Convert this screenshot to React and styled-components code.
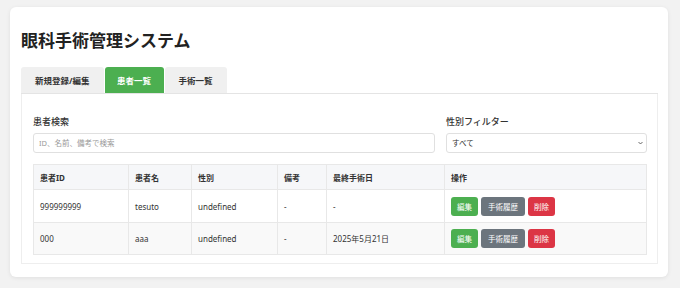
import React from "react";
import styled, { createGlobalStyle } from "styled-components";

const GlobalStyle = createGlobalStyle`
  body {
    margin: 0;
    background: #f2f2f2;
    font-family: "Noto Sans", "Noto Sans CJK JP", sans-serif;
    color: #333;
  }
`;

const Page = styled.div`
  padding: 7px 12px 12px 10px;
`;

const Card = styled.div`
  background: #fff;
  border-radius: 6px;
  box-shadow: 0 1px 4px rgba(0, 0, 0, 0.08);
  padding: 22px 10px 13px 11px;
`;

const Title = styled.h1`
  margin: 0 0 14px;
  font-size: 17px;
  line-height: 24px;
  font-weight: 700;
  color: #222;
`;

const TabBar = styled.div`
  display: flex;
  gap: 1px;
  border-bottom: 1px solid #e4e4e4;
`;

const Tab = styled.button`
  height: 26px;
  padding: 0 ${(p) => p.$pad}px;
  border: none;
  border-radius: 3px 3px 0 0;
  font-family: inherit;
  font-size: 8.5px;
  font-weight: 700;
  background: ${(p) => (p.$active ? "#4caf50" : "#f0f0f0")};
  color: ${(p) => (p.$active ? "#fff" : "#333")};
`;

const Panel = styled.div`
  border: 1px solid #eeeeee;
  border-top: none;
  padding: 21px 10px 8px 11px;
`;

const Filters = styled.div`
  display: flex;
  gap: 11px;
  margin-bottom: 11px;
`;

const Field = styled.div`
  flex: ${(p) => p.$grow};
  display: flex;
  flex-direction: column;
`;

const Label = styled.label`
  font-size: 9px;
  line-height: 13px;
  font-weight: 500;
  color: #333;
  margin-bottom: 5px;
`;

const Input = styled.input`
  display: block;
  box-sizing: border-box;
  height: 20px;
  border: 1px solid #e0e0e0;
  border-radius: 3px;
  padding: 0 5px;
  font-family: inherit;
  font-size: 7.5px;
  outline: none;
  &::placeholder {
    color: #999;
  }
`;

const SelectWrap = styled.div`
  position: relative;
  height: 20px;
`;

const Select = styled.select`
  display: block;
  box-sizing: border-box;
  width: 100%;
  height: 20px;
  border: 1px solid #e0e0e0;
  border-radius: 3px;
  padding: 0 5px;
  font-family: inherit;
  font-size: 7.5px;
  color: #333;
  background: #fff;
  appearance: none;
  outline: none;
`;

const Chevron = styled.svg`
  position: absolute;
  right: 4px;
  top: 50%;
  transform: translateY(-50%);
  pointer-events: none;
`;

const Table = styled.table`
  width: 100%;
  table-layout: fixed;
  border-collapse: collapse;
  font-size: 8px;
`;

const Th = styled.th`
  box-sizing: border-box;
  text-align: left;
  font-weight: 700;
  background: #f6f7f9;
  height: 25px;
  padding: 0 6px;
  border: 1px solid #e8e8e8;
  ${(p) => p.$w && `width: ${p.$w}px;`}
`;

const Row = styled.tr`
  background: ${(p) => (p.$striped ? "#f9f9f9" : "#fff")};
`;

const Td = styled.td`
  box-sizing: border-box;
  height: ${(p) => p.$h}px;
  padding: 0 6px;
  border: 1px solid #e8e8e8;
  color: #333;
`;

const Actions = styled.div`
  display: flex;
  gap: 3px;
`;

const ActionButton = styled.button`
  height: 19px;
  padding: 0 ${(p) => (p.$wide ? 7 : 6)}px;
  border: none;
  border-radius: 3px;
  font-family: inherit;
  font-size: 7.5px;
  color: #fff;
  background: ${(p) => p.$bg};
`;

const patients = [
  { id: "999999999", name: "tesuto", sex: "undefined", note: "-", last: "-" },
  { id: "000", name: "aaa", sex: "undefined", note: "-", last: "2025年5月21日" },
];

export default function App() {
  return (
    <>
      <GlobalStyle />
      <Page>
        <Card>
          <Title>眼科手術管理システム</Title>
          <TabBar>
            <Tab $pad={14}>新規登録/編集</Tab>
            <Tab $pad={12.5} $active>患者一覧</Tab>
            <Tab $pad={14}>手術一覧</Tab>
          </TabBar>
          <Panel>
            <Filters>
              <Field $grow={2}>
                <Label>患者検索</Label>
                <Input placeholder="ID、名前、備考で検索" />
              </Field>
              <Field $grow={1}>
                <Label>性別フィルター</Label>
                <SelectWrap>
                  <Select defaultValue="all">
                    <option value="all">すべて</option>
                  </Select>
                  <Chevron width="5" height="4" viewBox="0 0 10 6">
                    <path d="M1 1l4 4 4-4" fill="none" stroke="#444" strokeWidth="1.6" />
                  </Chevron>
                </SelectWrap>
              </Field>
            </Filters>
            <Table>
              <thead>
                <tr>
                  <Th $w={95}>患者ID</Th>
                  <Th $w={63}>患者名</Th>
                  <Th $w={86}>性別</Th>
                  <Th $w={49}>備考</Th>
                  <Th $w={118}>最終手術日</Th>
                  <Th>操作</Th>
                </tr>
              </thead>
              <tbody>
                {patients.map((p, i) => (
                  <Row key={p.id} $striped={i % 2 === 1}>
                    <Td $h={i === 0 ? 33 : 32}>{p.id}</Td>
                    <Td>{p.name}</Td>
                    <Td>{p.sex}</Td>
                    <Td>{p.note}</Td>
                    <Td>{p.last}</Td>
                    <Td>
                      <Actions>
                        <ActionButton $bg="#4caf50">編集</ActionButton>
                        <ActionButton $bg="#6c757d" $wide>手術履歴</ActionButton>
                        <ActionButton $bg="#dc3545">削除</ActionButton>
                      </Actions>
                    </Td>
                  </Row>
                ))}
              </tbody>
            </Table>
          </Panel>
        </Card>
      </Page>
    </>
  );
}
